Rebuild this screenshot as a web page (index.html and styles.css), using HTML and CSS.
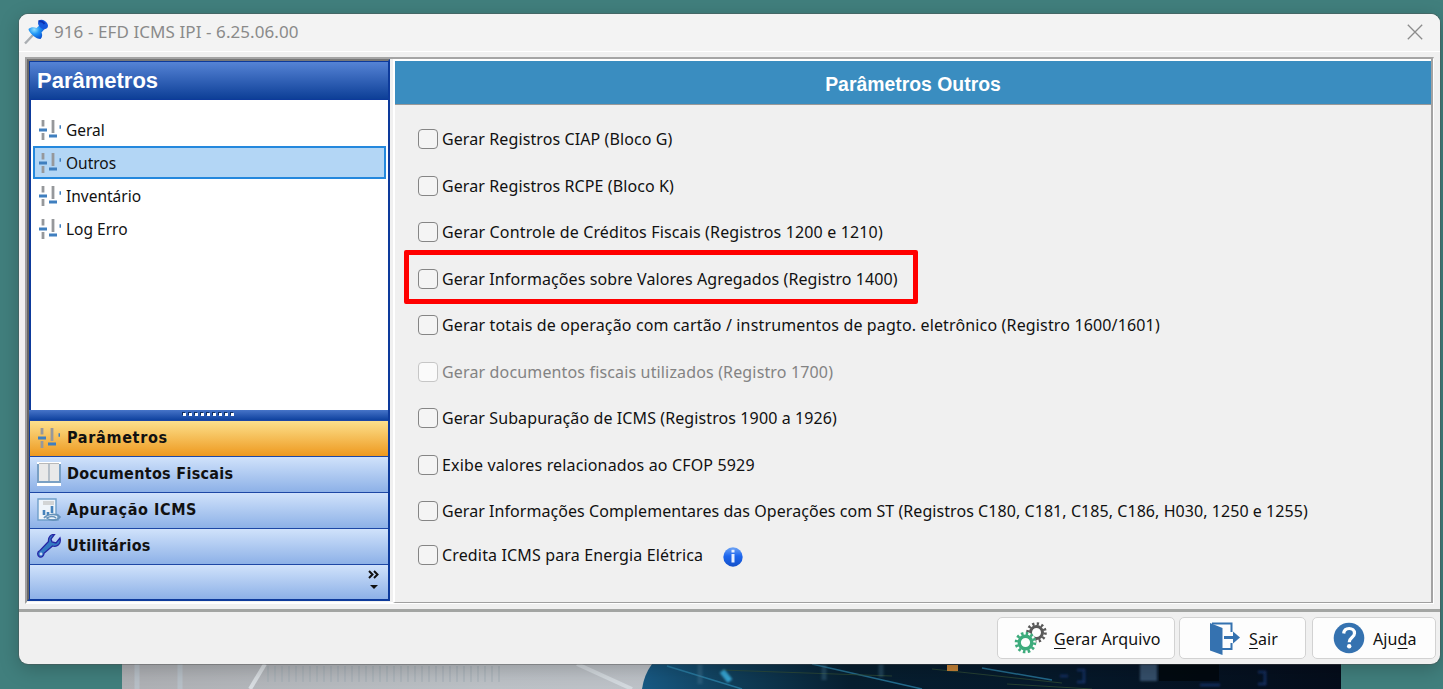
FILE: index.html
```html
<!DOCTYPE html>
<html lang="pt-BR">

<head>
  <meta charset="UTF-8">
  <meta name="viewport" content="width=device-width, initial-scale=1.0">
  <title>916 - EFD ICMS IPI - 6.25.06.00</title>
  <link rel="stylesheet" href="styles.css">
</head>

<body>
  <svg class="defs" width="0" height="0">
    <symbol id="sliders" viewBox="0 0 24 24">
      <path d="M5 2V8.500M5 15v7M15 2V15" stroke="#96989b" stroke-width="2.800" fill="none"/>
      <path d="M1 12h8M11 18h8" stroke="#3f7fbf" stroke-width="3.200" fill="none"/>
      <path d="M21.500 9h1.500" stroke="#3f7fbf" stroke-width="3.400" fill="none"/>
    </symbol>
  </svg>

  <div class="window">
    <div class="titlebar">
      <svg class="pin" width="26" height="26" viewBox="0 0 26 26">
        <defs>
          <radialGradient id="pin-body" cx="35%" cy="35%" r="70%">
            <stop offset="0" stop-color="#8fe2ff"/>
            <stop offset=".45" stop-color="#2196f5"/>
            <stop offset="1" stop-color="#0a4fd0"/>
          </radialGradient>
        </defs>
        <path d="M1 24.500L9.500 15.500" stroke="#aaaeb2" stroke-width="2.400"/>
        <path d="M4.500 10c2.500-2.500 6-2 8-1l4-3.500 4.500 4-3.500 4c1 2 1 4.500-1 6.500-2 0-5-1-7.500-3.500S4.500 12 4.500 10z" fill="url(#pin-body)"/>
        <ellipse cx="19" cy="5.500" rx="5.500" ry="4" transform="rotate(40 19 5.500)" fill="#1558dd"/>
        <path d="M14.500 2.500c2-1 5 .5 6 2.500" stroke="#0a2fb0" stroke-width="2" fill="none"/>
      </svg>
      <span class="title">916 - EFD ICMS IPI - 6.25.06.00</span>
      <svg class="close" width="16" height="16" viewBox="0 0 16 16">
        <path d="M.8.8l14.400 14.400M15.200.8L.8 15.200" stroke="#8c8c8c" stroke-width="1.300"/>
      </svg>
    </div>

    <div class="content">
      <div class="sidebar">
        <div class="sidebar-header">Parâmetros</div>
        <ul class="list">
          <li><svg class="icon"><use href="#sliders"/></svg>Geral</li>
          <li class="selected"><svg class="icon"><use href="#sliders"/></svg>Outros</li>
          <li><svg class="icon"><use href="#sliders"/></svg>Inventário</li>
          <li><svg class="icon"><use href="#sliders"/></svg>Log Erro</li>
        </ul>
        <div class="splitter">
          <i></i><i></i><i></i><i></i><i></i><i></i><i></i><i></i><i></i>
        </div>
        <div class="group active"><svg class="icon"><use href="#sliders"/></svg><span class="label-param">Parâmetros</span></div>
        <div class="group">
          <svg class="icon" viewBox="0 0 24 24">
            <path d="M0 0h24v24H0z" fill="#fff"/>
            <path d="M0 2h24v19H0z" fill="#7aa0c4"/>
            <path d="M2 2h9.500v17H2zM12.500 2H22v17h-9.500z" fill="#e9e9e9"/>
            <path d="M2 1.500h20M12 2v17" stroke="#b9b9b9"/>
          </svg>
          <span class="label-docs">Documentos Fiscais</span>
        </div>
        <div class="group">
          <svg class="icon" viewBox="0 0 24 24">
            <path d="M1 1h18v15l2 1v5H1z" fill="#eef4fa" stroke="#6f9fca" stroke-width="1.400"/>
            <path d="M6 4h11M6 6h11" stroke="#c9c9c9" stroke-width="1.400"/>
            <path d="M7 17v-5M11 17v-3M15 15V8" stroke="#4582bb" stroke-width="2.600"/>
            <path d="M7 20c3-4 12-5 16-1-3 4-10 4-13 1 3-2 7-2 9 0" fill="none" stroke="#6592bb" stroke-width="1.700"/>
          </svg>
          <span class="label-icms">Apuração ICMS</span>
        </div>
        <div class="group">
          <svg class="icon" viewBox="0 0 24 24">
            <path d="M23 4l-4 5-4-1-1-3 3.500-4.500C14 0 11 3 11.500 7.500L3 16.500c-3 1-3 5-.5 6.300 2.500 1 4.500-1 4.500-3.500L15.500 12C20 13.500 24.500 10 23 4z" fill="#3479c2" stroke="#2626a5" stroke-width="1.300"/>
            <circle cx="4" cy="20" r="1.400" fill="#c7daf5"/>
          </svg>
          <span class="label-util">Utilitários</span>
        </div>
        <div class="group overflow">
          <svg width="14" height="22" viewBox="0 0 14 22">
            <path d="M2 2l3.500 3.500L2 9M7 2l3.500 3.500L7 9" stroke="#111" stroke-width="2" fill="none"/>
            <path d="M3 16h8l-4 4z" fill="#111"/>
          </svg>
        </div>
      </div>

      <div class="panel">
        <div class="panel-header">Parâmetros Outros</div>
        <div class="options">
          <label class="option"><input type="checkbox"><span>Gerar Registros CIAP (Bloco G)</span></label>
          <label class="option"><input type="checkbox"><span>Gerar Registros RCPE (Bloco K)</span></label>
          <label class="option wide"><input type="checkbox"><span>Gerar Controle de Créditos Fiscais (Registros 1200 e 1210)</span></label>
          <label class="option highlight"><input type="checkbox"><span>Gerar Informações sobre Valores Agregados (Registro 1400)</span></label>
          <label class="option wide"><input type="checkbox"><span>Gerar totais de operação com cartão / instrumentos de pagto. eletrônico (Registro 1600/1601)</span></label>
          <label class="option wide disabled"><input type="checkbox" disabled><span>Gerar documentos fiscais utilizados (Registro 1700)</span></label>
          <label class="option"><input type="checkbox"><span>Gerar Subapuração de ICMS (Registros 1900 a 1926)</span></label>
          <label class="option wide"><input type="checkbox"><span>Exibe valores relacionados ao CFOP 5929</span></label>
          <label class="option narrow"><input type="checkbox"><span>Gerar Informações Complementares das Operações com ST (Registros C180, C181, C185, C186, H030, 1250 e 1255)</span></label>
          <label class="option wide last"><input type="checkbox"><span>Credita ICMS para Energia Elétrica</span>
            <svg class="info" width="20" height="20" viewBox="0 0 20 20">
              <defs>
                <linearGradient id="info-bg" x1="0" y1="0" x2="0" y2="1">
                  <stop offset="0" stop-color="#6fa4f4"/>
                  <stop offset=".45" stop-color="#1d66ee"/>
                  <stop offset="1" stop-color="#1450c8"/>
                </linearGradient>
              </defs>
              <circle cx="10" cy="10" r="9.700" fill="url(#info-bg)"/>
              <path d="M10 2.800v2.600M10 7v8.500" stroke="#e6efff" stroke-width="3"/>
            </svg>
          </label>
        </div>
      </div>
    </div>

    <div class="footer">
      <button class="btn btn-run">
        <svg width="34" height="32" viewBox="0 0 34 32">
          <circle cx="22.500" cy="10.500" r="6" fill="none" stroke="#595959" stroke-width="3"/>
          <circle cx="22.500" cy="10.500" r="8.700" fill="none" stroke="#595959" stroke-width="3.200" stroke-dasharray="2.200 2.355"/>
          <circle cx="11.500" cy="20.500" r="10.500" fill="#fdfdfd"/>
          <circle cx="11.500" cy="20.500" r="6.300" fill="none" stroke="#3dab7c" stroke-width="3.400"/>
          <circle cx="11.500" cy="20.500" r="9.200" fill="none" stroke="#3dab7c" stroke-width="3.200" stroke-dasharray="2.500 2.317"/>
        </svg>
        <span><u>G</u>erar Arquivo</span>
      </button>
      <button class="btn btn-exit">
        <svg width="32" height="33" viewBox="0 0 32 33">
          <path d="M3 1.500h19.500V10M22.500 21v6H13" fill="none" stroke="#3572b0" stroke-width="2"/>
          <path d="M1 1l12.500 5v27L1 28.500z" fill="#3572b0"/>
          <path d="M15 15.500h11" stroke="#3572b0" stroke-width="3"/>
          <path d="M24 9.500l7 6-7 6z" fill="#3572b0"/>
        </svg>
        <span><u>S</u>air</span>
      </button>
      <button class="btn btn-help">
        <svg width="32" height="32" viewBox="0 0 32 32">
          <circle cx="16" cy="16" r="15.300" fill="#3572b0"/>
          <path d="M10.700 11.500c.3-3.500 2.800-5 5.500-5 3 0 5.300 1.800 5.300 4.700 0 4.300-5.300 4.300-5.300 9" fill="none" stroke="#fff" stroke-width="3.200"/>
          <circle cx="16.200" cy="24.300" r="2.200" fill="#fff"/>
        </svg>
        <span>Aju<u>d</u>a</span>
      </button>
    </div>
  </div>

  <svg class="wallpaper" width="1219" height="25" viewBox="0 0 1219 25">
    <defs>
      <linearGradient id="paper">
        <stop offset="0" stop-color="#aeb0b4"/>
        <stop offset=".3" stop-color="#bcc1c6"/>
        <stop offset="1" stop-color="#c5c9d1"/>
      </linearGradient>
      <linearGradient id="night">
        <stop offset="0" stop-color="#185a84"/>
        <stop offset=".12" stop-color="#11405c"/>
        <stop offset=".3" stop-color="#071f30"/>
        <stop offset=".6" stop-color="#06192b"/>
        <stop offset="1" stop-color="#050d1b"/>
      </linearGradient>
      <filter id="soft"><feGaussianBlur stdDeviation="1.200"/></filter>
    </defs>
    <path d="M0 0h1219v25H0z" fill="url(#paper)"/>
    <path d="M143 0L128 25" stroke="#d8dde1" stroke-width="4"/>
    <path d="M145 10h235" stroke="#9fabb3" stroke-width="16" stroke-dasharray="2 5" opacity=".4"/>
    <path d="M15 0v25M58 0v25" stroke="#bdc9d3" stroke-width="5" opacity=".6"/>
    <path d="M455 0l55 25" stroke="#dde3e8" stroke-width="4" opacity=".7"/>
    <path d="M530 0h689v25H520q2-14 10-25z" fill="url(#night)"/>
    <path d="M545 2l75 23M690 0l110 25M860 4l70 12" stroke="#2f8ab2" stroke-width="1.500" opacity=".7"/>
    <path d="M600 6l170 6M810 5l130 14M885 20l85 5" stroke="#345036" opacity=".7"/>
    <g filter="url(#soft)">
      <path d="M578 0v20M702 0v16M759 0v13" stroke="#4c7f9b" stroke-width="5" opacity=".35"/>
      <path d="M600 7l8 10" stroke="#36a3d0" stroke-width="6"/>
      <path d="M1018 0h17v17h-17z" fill="#34506a"/>
      <path d="M938 12h8M955 6h7v12h-7M1078 21h20M1136 8h7v12h-7" stroke="#183770" stroke-width="3" fill="none" opacity=".7"/>
    </g>
    <path d="M825 1h11v6h-11z" fill="#c78438"/>
    <path d="M1037 0h60v17h-60z" fill="#020509" opacity=".7"/>
  </svg>
</body>

</html>
```
FILE: styles.css
```css
*,
*::after {
  box-sizing: border-box;
}

body {
  margin: 0;
  height: 689px;
  padding-top: 14px;
  overflow: hidden;
  background-color: #417f7d;
  font-family: "Noto Sans", "Open Sans", sans-serif;
  color: #111;
}

.defs {
  display: none;
}

.window {
  position: relative;
  z-index: 1;
  display: flex;
  flex-direction: column;
  width: 1421px;
  height: 650px;
  margin-left: 19px;
  border-radius: 9px;
  background-color: #f0f0f0;
  box-shadow: 0 0 0 1px rgba(80, 80, 80, .4), 0 5px 20px rgba(0, 0, 0, .22);
  overflow: hidden;
}

.titlebar {
  display: flex;
  align-items: center;
  height: 38px;
  padding: 0 17px 2px 5px;
  background-color: #f3f3f3;
  border-bottom: 1px solid #fff;
}

.title {
  margin-left: 4px;
  padding-bottom: 1px;
  font-size: 17px;
  letter-spacing: .08px;
  color: #8a8a8a;
}

.close {
  margin-left: auto;
}

.content {
  display: flex;
  height: 547px;
  margin: 5px 6px 0;
  border-top: 2px solid #a5a5a5;
  border-left: 2px solid #a0a0a0;
  border-bottom: 2px solid #fff;
  border-right: 1px solid #fff;
}

/* sidebar */
.sidebar {
  display: flex;
  flex-direction: column;
  width: 363px;
  height: 542px;
  border: 2px solid #0d3a9b;
  border-left: 2px solid #666;
  border-top: 2px solid #777;
  background-color: #fff;
}

.sidebar-header {
  height: 39px;
  padding-left: 7px;
  border: 1px solid #0d3a9b;
  border-right: 0;
  background-image: linear-gradient(#5583d5, #0d3f97);
  color: #fff;
  font: bold 22px/37px "Liberation Sans", sans-serif;
}

.list {
  flex: 1;
  margin: 0;
  padding: 13px 2px 0 2px;
  border-left: 2px solid #0d3a9b;
  list-style: none;
  font-size: 15.500px;
}

.list li {
  display: flex;
  align-items: center;
  height: 33px;
  padding: 1px 0 0 4px;
  border: 1px solid transparent;
}

.list .selected {
  border: 2px solid #2488dd;
  padding-left: 3px;
  background-color: #b3d6f5;
}

.icon {
  flex: none;
  width: 24px;
  height: 24px;
  margin-right: 4px;
}

.splitter {
  display: flex;
  justify-content: center;
  align-items: center;
  gap: 3px;
  height: 10px;
  padding-bottom: 2px;
  background-image: linear-gradient(#4674c8, #0f429f);
}

.splitter i {
  width: 3px;
  height: 3px;
  background-color: #fff;
  box-shadow: -1px -1px 0 #0c2c60;
}

.group {
  display: flex;
  align-items: center;
  height: 36px;
  padding: 0 0 2px 7px;
  border-top: 1px solid #1d47a5;
  border-left: 1px solid #0d3a9b;
  background-image: linear-gradient(#d0e2fb, #8db1e7);
  font: bold 16px "DejaVu Sans Condensed", "DejaVu Sans", sans-serif;
}

.group span {
  margin-left: 2px;
}

.label-param {
  letter-spacing: .7px;
}

.label-docs,
.label-util {
  letter-spacing: .3px;
}

.label-icms {
  letter-spacing: .6px;
}

.active {
  background-image: linear-gradient(#fce08c, #ee991f);
}

.overflow {
  justify-content: flex-end;
  align-items: flex-start;
  height: 35px;
  padding: 4px 7px 0 0;
}

/* main panel */
.panel {
  flex: 1;
  margin-left: 3px;
  border-left: 2px solid #fff;
  border-right: 2px solid #a3a3a3;
  border-bottom: 1px solid #a0a0a0;
  height: 544px;
}

.panel-header {
  height: 46px;
  border-top: 2px solid #fff;
  border-bottom: 1px solid #999;
  background-color: #3a8dc0;
  color: #fff;
  font: bold 19.400px/46px "Liberation Sans", sans-serif;
  text-align: center;
}

.options {
  padding: 11px 0 0 22.500px;
}

.option {
  position: relative;
  display: flex;
  align-items: center;
  height: 46.500px;
  font-size: 16px;
  letter-spacing: .1px;
  white-space: nowrap;
}

.option input {
  appearance: none;
  flex: none;
  width: 20px;
  height: 20px;
  margin: 0 4.500px 0 0;
  border: 1.500px solid #858585;
  border-radius: 4px;
  background-color: #f4f4f4;
}

.wide {
  letter-spacing: .15px;
}

.narrow {
  letter-spacing: .06px;
}

.disabled {
  color: #838383;
}

.disabled input {
  border-color: #c6c6c6;
  background-color: #fafafa;
}

.last {
  height: 41px;
}

.info {
  margin: 4px 0 0 20px;
}

.highlight::after {
  content: "";
  position: absolute;
  left: -14px;
  top: -6px;
  width: 514px;
  height: 54px;
  border: 5px solid #f00;
  border-radius: 2px;
}

/* buttons */
.footer {
  display: flex;
  justify-content: flex-end;
  align-items: flex-start;
  gap: 4px;
  flex: 1;
  margin-top: 5px;
  padding: 5px 4px 0 0;
  border-top: 3px solid #a3a5a3;
}

.btn {
  display: flex;
  align-items: center;
  height: 42px;
  padding: 0;
  border: 1px solid #d2d2d2;
  border-radius: 5px;
  background-color: #fdfdfd;
  color: #111;
  font: 16px "Noto Sans", "Open Sans", sans-serif;
}

.btn span {
  padding-top: 2px;
  letter-spacing: .12px;
}

.btn u {
  text-underline-offset: 3px;
}

.btn-run {
  width: 178px;
  padding-left: 16px;
}

.btn-run span {
  margin-left: 6px;
}

.btn-exit {
  width: 127px;
  padding-left: 29px;
}

.btn-exit span {
  margin-left: 8px;
}

.btn-help {
  width: 124px;
  margin-left: 2px;
  padding-left: 20px;
}

.btn-help span {
  margin-left: 8px;
}

.wallpaper {
  display: block;
  margin-left: 122px;
}
```
